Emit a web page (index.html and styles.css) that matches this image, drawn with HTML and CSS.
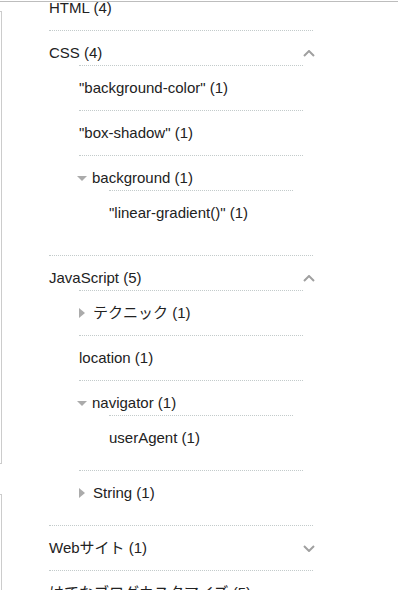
FILE: index.html
```html
<!DOCTYPE html>
<html lang="ja">
<head>
<meta charset="utf-8">
<title>Categories</title>
<link rel="stylesheet" href="styles.css">
</head>
<body>
<div class="page">
  <div class="rail">
    <div class="rail-box rail-top"></div>
    <div class="rail-box rail-bottom"></div>
  </div>
  <div class="content">
    <ul class="cat-list">
      <li class="cat">
        <div class="row"><a class="label">HTML (4)</a></div>
      </li>
      <li class="cat open">
        <div class="row"><a class="label">CSS (4)</a>
          <svg class="chev" width="12" height="7" viewBox="0 0 12 7"><polyline points="1,6 6,1 11,6" fill="none" stroke="#a0a0a0" stroke-width="2"/></svg>
        </div>
        <ul class="sub">
          <li><div class="row"><a class="label">"background-color" (1)</a></div></li>
          <li><div class="row"><a class="label">"box-shadow" (1)</a></div></li>
          <li class="open">
            <div class="row"><span class="tri-down"></span><a class="label">background (1)</a></div>
            <ul class="sub">
              <li><div class="row"><a class="label">"linear-gradient()" (1)</a></div></li>
            </ul>
          </li>
        </ul>
      </li>
      <li class="cat open">
        <div class="row"><a class="label">JavaScript (5)</a>
          <svg class="chev" width="12" height="7" viewBox="0 0 12 7"><polyline points="1,6 6,1 11,6" fill="none" stroke="#a0a0a0" stroke-width="2"/></svg>
        </div>
        <ul class="sub">
          <li><div class="row"><span class="tri-right"></span><a class="label">テクニック (1)</a></div></li>
          <li><div class="row"><a class="label">location (1)</a></div></li>
          <li class="open">
            <div class="row"><span class="tri-down"></span><a class="label">navigator (1)</a></div>
            <ul class="sub">
              <li><div class="row"><a class="label">userAgent (1)</a></div></li>
            </ul>
          </li>
          <li><div class="row"><span class="tri-right"></span><a class="label">String (1)</a></div></li>
        </ul>
      </li>
      <li class="cat">
        <div class="row"><a class="label">Webサイト (1)</a>
          <svg class="chev" width="12" height="7" viewBox="0 0 12 7"><polyline points="1,1 6,6 11,1" fill="none" stroke="#a0a0a0" stroke-width="2"/></svg>
        </div>
      </li>
      <li class="cat">
        <div class="row"><a class="label">はてなブログカスタマイズ (5)</a></div>
      </li>
    </ul>
  </div>
</div>
</body>
</html>
```
FILE: styles.css
```css
html, body {
  margin: 0;
  padding: 0;
  background: #fff;
  overflow: hidden;
}

body {
  font-family: "Liberation Sans", Arial, "Noto Sans CJK JP", sans-serif;
  font-size: 15px;
  color: #222;
}

.page {
  margin-top: 1px;
  border-top: 1px solid #bdbdbd;
  display: flex;
  align-items: flex-start;
}

.rail {
  flex: none;
  width: 2px;
  display: flex;
  flex-direction: column;
}

.rail-box {
  width: 1px;
  border: 1px solid #cccccc;
  border-left: none;
}

.rail-top {
  margin-top: 9px;
  height: 451px;
}

.rail-bottom {
  margin-top: 30px;
  height: 200px;
}

.content {
  flex: 1;
  padding-left: 47px;
}

.cat-list {
  list-style: none;
  margin: -16px 0 0;
  padding: 0;
  width: 264px;
}

.cat {
  border-bottom: 1px dotted #c3cbcb;
}

.row {
  display: flex;
  align-items: center;
  height: 20px;
  line-height: 20px;
  padding: 12px 0;
  white-space: nowrap;
}

.open > .row {
  padding-bottom: 2px;
}

.label {
  color: #222;
  text-decoration: none;
}

.chev {
  margin-left: auto;
  margin-right: -2px;
  flex: none;
}

.sub {
  list-style: none;
  margin: 0 10px 0 30px;
  padding: 0 0 10px;
  border-top: 1px dotted #c3cbcb;
}

.sub > li {
  border-bottom: 1px dotted #c3cbcb;
}

.sub > li:last-child {
  border-bottom: none;
}

.tri-down {
  flex: none;
  width: 0;
  height: 0;
  margin-left: -2px;
  margin-right: 5px;
  border-left: 5px solid transparent;
  border-right: 5px solid transparent;
  border-top: 5px solid #ababab;
}

.tri-right {
  flex: none;
  width: 0;
  height: 0;
  margin-right: 8px;
  border-top: 5px solid transparent;
  border-bottom: 5px solid transparent;
  border-left: 6px solid #ababab;
}
```
